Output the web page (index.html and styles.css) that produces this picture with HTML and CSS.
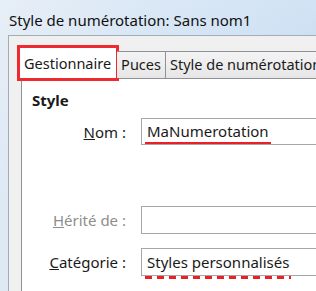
FILE: index.html
```html
<!DOCTYPE html>
<html lang="fr">
<head>
<meta charset="utf-8">
<title>Style de numérotation</title>
<link rel="stylesheet" href="styles.css">
</head>
<body>
<div class="window">
  <div class="titlebar">Style de numérotation: Sans nom1</div>
  <div class="client">
    <div class="tabs">
      <div class="tab selected">Gestionnaire</div>
      <div class="tab">Puces</div>
      <div class="tab">Style de numérotation</div>
    </div>
    <div class="panel">
      <div class="heading">Style</div>
      <div class="form">
        <div class="row">
          <label class="label"><u>N</u>om :</label>
          <div class="field"><span class="value mark-solid">MaNumerotation</span></div>
        </div>
        <div class="row row-inherit">
          <label class="label disabled"><u>H</u>érité de :</label>
          <div class="field field-tall"></div>
        </div>
        <div class="row row-cat">
          <label class="label"><u>C</u>atégorie :</label>
          <div class="field field-tall"><span class="value mark-dashed">Styles personnalisés</span></div>
        </div>
      </div>
    </div>
  </div>
</div>
</body>
</html>
```
FILE: styles.css
```css
html, body {
  margin: 0;
  padding: 0;
}
body {
  width: 316px;
  height: 291px;
  overflow: hidden;
  font-family: "Noto Sans", "Liberation Sans", sans-serif;
  font-size: 15px;
  color: #1a1a1a;
}
.window {
  width: 316px;
  height: 291px;
  display: flex;
  flex-direction: column;
  overflow: hidden;
  background:
    linear-gradient(180deg, rgba(240, 245, 250, 0.45) 0, rgba(240, 245, 250, 0) 70%),
    linear-gradient(90deg, #dfe9f4 0, #cadef2 45%, #b8d4ef 100%);
}
.titlebar {
  height: 35px;
  box-sizing: border-box;
  padding: 10px 0 0 9px;
  line-height: 20px;
  color: #111;
  white-space: nowrap;
}
.client {
  flex: 1;
  margin-left: 8px;
  margin-right: -40px;
  border-left: 1px solid #a3adb8;
  border-top: 1px solid #a3adb8;
  background: #f0f0f0;
  display: flex;
  flex-direction: column;
  padding-left: 12px;
}
.tabs {
  display: flex;
  align-items: flex-end;
  height: 42px;
  position: relative;
  z-index: 1;
  font-size: 14.5px;
}
.tab {
  height: 27px;
  box-sizing: border-box;
  border: 1px solid #8e9199;
  border-bottom: none;
  border-left: none;
  background: linear-gradient(180deg, #f4f4f4 0, #e6e6e6 100%);
  padding: 0 4px 0 4px;
  line-height: 25px;
  white-space: nowrap;
}
.tab.selected {
  height: 32px;
  margin: 0 0 -1px -2px;
  padding: 2px 5px 0 4px;
  border-left: 1px solid #8e9199;
  border-right: 1px solid #8e9199;
  background: #ffffff;
  outline: 3px solid #ed2a30;
  outline-offset: -1px;
  line-height: 26px;
}
.panel {
  flex: 1;
  background: #ffffff;
  border-left: 1px solid #8e9199;
  border-top: 1px solid #8e9199;
  padding: 11px 0 0 10px;
}
.heading {
  font-weight: bold;
  line-height: 20px;
}
.form {
  margin-top: 8px;
}
.row {
  display: flex;
  align-items: center;
}
.row-inherit {
  margin-top: 61px;
}
.row-cat {
  margin-top: 14px;
}
.label {
  width: 94px;
  text-align: right;
  margin-right: 15px;
  white-space: nowrap;
}
.label.disabled {
  color: #8d8d8d;
}
.field {
  flex: 1;
  height: 27px;
  box-sizing: border-box;
  border: 1px solid #a7a7a7;
  display: flex;
  align-items: flex-end;
  padding-left: 3px;
}
.field-tall {
  height: 28px;
}
.value {
  display: inline-block;
  line-height: 20px;
  padding: 0 2px 3px;
  white-space: nowrap;
}
.mark-solid {
  background: linear-gradient(#ec1f26, #ec1f26) left bottom / 100% 2px no-repeat;
}
.mark-dashed {
  padding-bottom: 7px;
  margin-bottom: -4px;
  background: repeating-linear-gradient(90deg, #ec1f26 0 7px, transparent 7px 12px) left bottom / 100% 3px no-repeat;
}
```
